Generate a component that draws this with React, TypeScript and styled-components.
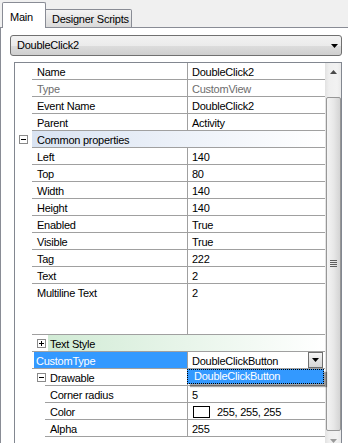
import React from "react";
import styled, { createGlobalStyle, css } from "styled-components";

const GlobalStyle = createGlobalStyle`
  html, body { margin: 0; padding: 0; background: #f0f0f0; }
  body {
    font-family: "Liberation Sans", Arial, sans-serif;
    font-size: 11px;
    letter-spacing: -0.25px;
    color: #000;
  }
  * { box-sizing: border-box; }
`;

const Window = styled.div`
  width: 348px;
  height: 443px;
  overflow: hidden;
  display: flex;
  flex-direction: column;
  background: #f0f0f0;
`;

const TabStrip = styled.div`
  display: flex;
  align-items: flex-end;
  height: 28px;
  flex-shrink: 0;
`;

const TabEdge = styled.div<{ $grow?: boolean }>`
  align-self: stretch;
  width: 2px;
  flex: ${(p) => (p.$grow ? "1" : "none")};
  border-bottom: 1px solid #898c95;
`;

const Tab = styled.div<{ $active?: boolean }>`
  display: flex;
  white-space: nowrap;
  line-height: 13px;
  border: 1px solid #898c95;
  border-radius: 2px 2px 0 0;
  ${(p) =>
    p.$active
      ? css`
          width: 44px;
          height: 26px;
          padding: 8px 0 0 7px;
          border-bottom: none;
          background: #fff;
        `
      : css`
          width: 86px;
          height: 19px;
          padding: 3px 0 0 6px;
          border-left: none;
          border-radius: 0 2px 0 0;
          background: linear-gradient(#f3f3f3, #e6e6e6 50%, #dadada);
        `}
`;

const Panel = styled.div`
  flex: 1;
  background: #fff;
  border-left: 1px solid #898c95;
  padding: 7px 0 0 9px;
  display: flex;
  flex-direction: column;
  align-items: flex-start;
`;

const Combo = styled.div`
  width: 332px;
  height: 21px;
  flex-shrink: 0;
  border: 1px solid #707070;
  border-radius: 3px;
  background: linear-gradient(#f2f2f2, #ebebeb 50%, #dddddd 51%, #cfcfcf);
  display: flex;
  align-items: center;
  justify-content: space-between;
  padding: 0 3px 0 6px;
  line-height: 13px;
`;

const Grid = styled.div`
  position: relative;
  margin: 6px 0 0 4px;
  width: 328px;
  height: 388px;
  flex-shrink: 0;
  border: 1px solid #828790;
  background: #fff;
  display: flex;
`;

const Rows = styled.div`
  width: 310px;
  flex-shrink: 0;
  display: flex;
  flex-direction: column;
`;

const RowBox = styled.div<{ $h: number }>`
  height: ${(p) => p.$h}px;
  flex-shrink: 0;
  display: flex;
  flex-direction: column;
`;

const RowBody = styled.div`
  flex: 1;
  min-height: 0;
  display: flex;
`;

const RowLine = styled.div<{ $indent: number }>`
  height: 1px;
  margin-left: ${(p) => p.$indent}px;
  background: #a0a0a0;
`;

const Gutter = styled.div<{ $w: number; $pl?: number }>`
  width: ${(p) => p.$w}px;
  flex-shrink: 0;
  display: flex;
  align-items: center;
  justify-content: ${(p) => (p.$pl !== undefined ? "flex-start" : "center")};
  padding-left: ${(p) => p.$pl ?? 0}px;
`;

const NameCell = styled.div<{ $w: number; $pl: number; $muted?: boolean }>`
  width: ${(p) => p.$w}px;
  flex-shrink: 0;
  border-right: 1px solid #a0a0a0;
  padding-left: ${(p) => p.$pl}px;
  display: flex;
  color: ${(p) => (p.$muted ? "#6d6d6d" : "#000")};
`;

const SelectedName = styled.div`
  flex: 1;
  margin-left: -3px;
  padding-left: 2px;
  background: #3399ff;
  color: #fff;
  display: flex;
`;

const ValueCell = styled.div<{ $muted?: boolean }>`
  flex: 1;
  min-width: 0;
  padding-left: 4px;
  display: flex;
  color: ${(p) => (p.$muted ? "#6d6d6d" : "#000")};
`;

const CellText = styled.span`
  padding-top: 3px;
  line-height: 13px;
  white-space: nowrap;
`;

const CategoryBand = styled.div<{ $tone: "blue" | "green"; $pl: number }>`
  flex: 1;
  display: flex;
  padding-left: ${(p) => p.$pl}px;
  background: ${(p) =>
    p.$tone === "blue"
      ? "linear-gradient(to right, #d9e3f2, #ffffff)"
      : "linear-gradient(to right, #d1ebd5, #ffffff)"};
`;

const DropButton = styled.div`
  width: 15px;
  margin: 0 2px 0 auto;
  border: 1px solid #6f6f6f;
  background: linear-gradient(#f6f6f6, #e4e4e4 50%, #d6d6d6);
  display: flex;
  align-items: center;
  justify-content: center;
`;

const Swatch = styled.span`
  width: 17px;
  height: 12px;
  flex-shrink: 0;
  margin: 3px 7px 0 1px;
  border: 1px solid #000;
  background: #fff;
`;

const DropList = styled.div`
  position: absolute;
  left: 172px;
  top: 306px;
  width: 137px;
  height: 15px;
  padding: 0 0 0 6px;
  background: #3399ff;
  border: 1px dotted #000;
  color: #fff;
  line-height: 13px;
  box-shadow: 3px 3px 1px rgba(0, 0, 0, 0.35);
  white-space: nowrap;
`;

const ScrollBar = styled.div`
  width: 16px;
  flex-shrink: 0;
  display: flex;
  flex-direction: column;
  background: linear-gradient(to right, #e2e2e2, #efefef 25%, #f2f2f2 75%, #e9e9e9);
`;

const ScrollButton = styled.div`
  height: 17px;
  flex-shrink: 0;
  display: flex;
  align-items: center;
  justify-content: center;
`;

const ScrollTrack = styled.div`
  flex: 1;
  display: flex;
  flex-direction: column;
  padding: 17px 0 1px 1px;
`;

const Thumb = styled.div`
  flex: 1;
  border: 1px solid #979797;
  border-radius: 2px;
  background: linear-gradient(to right, #f4f4f4, #e8e8e8 50%, #d4d4d4);
  display: flex;
  align-items: center;
  justify-content: center;
`;

const ExpandBox = ({ plus }: { plus?: boolean }) => (
  <svg width="9" height="9" viewBox="0 0 9 9">
    <rect x="0.5" y="0.5" width="8" height="8" fill="#fff" stroke="#8a8a8a" />
    <path d="M2 4.5h5" stroke="#000" />
    {plus && <path d="M4.5 2v5" stroke="#000" />}
  </svg>
);

const DownArrow = ({ color = "#000" }: { color?: string }) => (
  <svg width="7" height="4" viewBox="0 0 7 4">
    <path d="M0 0h7L3.5 4z" fill={color} />
  </svg>
);

const UpArrow = ({ color = "#000" }: { color?: string }) => (
  <svg width="7" height="4" viewBox="0 0 7 4">
    <path d="M0 4h7L3.5 0z" fill={color} />
  </svg>
);

const Gripper = () => (
  <svg width="7" height="8" viewBox="0 0 7 8">
    {[0, 2, 4, 6].map((y) => (
      <rect key={y} x="0" y={y} width="7" height="1" fill="#5e5e5e" />
    ))}
  </svg>
);

type Prop = { name: string; value?: string; muted?: boolean; h?: number };

const topProps: Prop[] = [
  { name: "Name", value: "DoubleClick2" },
  { name: "Type", value: "CustomView", muted: true },
  { name: "Event Name", value: "DoubleClick2" },
  { name: "Parent", value: "Activity" },
];

const commonProps: Prop[] = [
  { name: "Left", value: "140" },
  { name: "Top", value: "80" },
  { name: "Width", value: "140" },
  { name: "Height", value: "140" },
  { name: "Enabled", value: "True" },
  { name: "Visible", value: "True" },
  { name: "Tag", value: "222" },
  { name: "Text", value: "2" },
  { name: "Multiline Text", value: "2", h: 51 },
];

const PropRow = ({ p }: { p: Prop }) => (
  <RowBox $h={p.h ?? 17}>
    <RowBody>
      <Gutter $w={17} />
      <NameCell $w={156} $pl={5} $muted={p.muted}>
        <CellText>{p.name}</CellText>
      </NameCell>
      <ValueCell $muted={p.muted}>
        <CellText>{p.value}</CellText>
      </ValueCell>
    </RowBody>
    <RowLine $indent={17} />
  </RowBox>
);

const NestedRow = ({ name, children }: { name: string; children: React.ReactNode }) => (
  <RowBox $h={17}>
    <RowBody>
      <Gutter $w={30} />
      <NameCell $w={143} $pl={5}>
        <CellText>{name}</CellText>
      </NameCell>
      <ValueCell>{children}</ValueCell>
    </RowBody>
    <RowLine $indent={30} />
  </RowBox>
);

export default function App() {
  return (
    <Window>
      <GlobalStyle />
      <TabStrip>
        <TabEdge />
        <Tab $active>Main</Tab>
        <Tab>Designer Scripts</Tab>
        <TabEdge $grow />
      </TabStrip>
      <Panel>
        <Combo>
          <span>DoubleClick2</span>
          <DownArrow />
        </Combo>
        <Grid>
          <Rows>
            {topProps.map((p) => (
              <PropRow key={p.name} p={p} />
            ))}
            <RowBox $h={17}>
              <RowBody>
                <Gutter $w={17}>
                  <ExpandBox />
                </Gutter>
                <CategoryBand $tone="blue" $pl={5}>
                  <CellText>Common properties</CellText>
                </CategoryBand>
              </RowBody>
              <RowLine $indent={17} />
            </RowBox>
            {commonProps.map((p) => (
              <PropRow key={p.name} p={p} />
            ))}
            <RowBox $h={17}>
              <RowBody>
                <Gutter $w={17} />
                <Gutter $w={16} $pl={5}>
                  <ExpandBox plus />
                </Gutter>
                <CategoryBand $tone="green" $pl={2}>
                  <CellText>Text Style</CellText>
                </CategoryBand>
              </RowBody>
              <RowLine $indent={17} />
            </RowBox>
            <RowBox $h={17}>
              <RowBody>
                <Gutter $w={17} />
                <NameCell $w={156} $pl={5}>
                  <SelectedName>
                    <CellText>CustomType</CellText>
                  </SelectedName>
                </NameCell>
                <ValueCell>
                  <CellText>DoubleClickButton</CellText>
                  <DropButton>
                    <DownArrow />
                  </DropButton>
                </ValueCell>
              </RowBody>
              <RowLine $indent={17} />
            </RowBox>
            <RowBox $h={17}>
              <RowBody>
                <Gutter $w={17} />
                <Gutter $w={16} $pl={5}>
                  <ExpandBox />
                </Gutter>
                <NameCell $w={140} $pl={2}>
                  <CellText>Drawable</CellText>
                </NameCell>
                <ValueCell />
              </RowBody>
              <RowLine $indent={30} />
            </RowBox>
            <NestedRow name="Corner radius">
              <CellText>5</CellText>
            </NestedRow>
            <NestedRow name="Color">
              <Swatch />
              <CellText>255, 255, 255</CellText>
            </NestedRow>
            <NestedRow name="Alpha">
              <CellText>255</CellText>
            </NestedRow>
          </Rows>
          <ScrollBar>
            <ScrollButton>
              <UpArrow color="#4a4a4a" />
            </ScrollButton>
            <ScrollTrack>
              <Thumb>
                <Gripper />
              </Thumb>
            </ScrollTrack>
            <ScrollButton>
              <DownArrow color="#9a9a9a" />
            </ScrollButton>
          </ScrollBar>
          <DropList>DoubleClickButton</DropList>
        </Grid>
      </Panel>
    </Window>
  );
}
